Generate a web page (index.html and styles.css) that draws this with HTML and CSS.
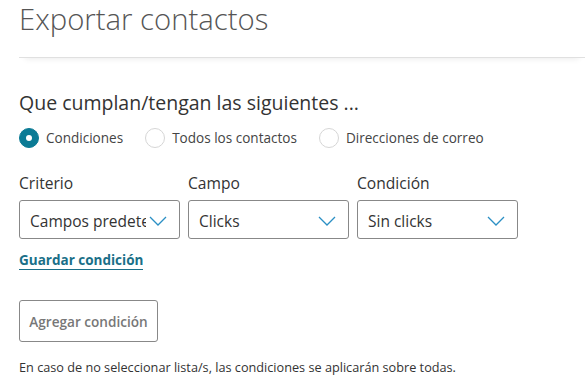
FILE: index.html
```html
<!DOCTYPE html>
<html lang="es">
<head>
<meta charset="utf-8">
<link rel="stylesheet" href="styles.css">
</head>
<body>
<div class="page">
  <header class="header">
    <h1 class="title">Exportar contactos</h1>
  </header>
  <section class="content">
    <h2 class="subtitle">Que cumplan/tengan las siguientes ...</h2>
    <div class="radios">
      <label class="radio"><span class="dot checked"></span>Condiciones</label>
      <label class="radio"><span class="dot"></span>Todos los contactos</label>
      <label class="radio"><span class="dot"></span>Direcciones de correo</label>
    </div>
    <div class="fields">
      <div class="field">
        <div class="label">Criterio</div>
        <div class="select"><span class="val">Campos predeterminados</span><svg class="chev" viewBox="0 0 18 10" width="18" height="10"><path d="M1 1l8 8 8-8" fill="none" stroke="currentColor" stroke-width="1.3"/></svg></div>
      </div>
      <div class="field">
        <div class="label">Campo</div>
        <div class="select"><span class="val">Clicks</span><svg class="chev" viewBox="0 0 18 10" width="18" height="10"><path d="M1 1l8 8 8-8" fill="none" stroke="currentColor" stroke-width="1.3"/></svg></div>
      </div>
      <div class="field">
        <div class="label">Condición</div>
        <div class="select"><span class="val">Sin clicks</span><svg class="chev" viewBox="0 0 18 10" width="18" height="10"><path d="M1 1l8 8 8-8" fill="none" stroke="currentColor" stroke-width="1.3"/></svg></div>
      </div>
    </div>
    <a class="save">Guardar condición</a>
    <div><button class="add">Agregar condición</button></div>
    <p class="note">En caso de no seleccionar lista/s, las condiciones se aplicarán sobre todas.</p>
  </section>
</div>
</body>
</html>
```
FILE: styles.css
```css
* { box-sizing: border-box; }
html, body { margin: 0; padding: 0; background: #fff; }
body { font-family: "Open Sans", "Liberation Sans", sans-serif; color: #333; }
.page { padding-left: 19px; }
.header {
  height: 58px;
  border-bottom: 1px solid #e0e0e0;
  box-shadow: 0 7px 6px -6px rgba(0,0,0,0.08);
}
.title {
  margin: 0;
  font-weight: 300;
  font-size: 29.3px;
  line-height: 38px;
  color: #555;
}
.content { padding-top: 32px; }
.subtitle {
  margin: 0;
  font-weight: 400;
  font-size: 19.5px;
  line-height: 26px;
  color: #333;
}
.radios { display: flex; margin-top: 11px; height: 22px; align-items: center; }
.radio {
  display: flex; align-items: center;
  font-size: 13.55px; color: #444;
  margin-right: 22px;
}
.dot {
  width: 20px; height: 20px; border-radius: 50%;
  border: 1px solid #d6d6d6; margin-right: 7px; background: #fff;
}
.dot.checked { background: #0b7b95; border-color: #0b7b95; position: relative; }
.dot.checked::after {
  content: ""; position: absolute; left: 6px; top: 6px;
  width: 6px; height: 6px; border-radius: 50%; background: #fff;
}
.fields { display: flex; gap: 8px; margin-top: 23px; }
.field { width: 161px; }
.label { font-size: 15.6px; line-height: 22px; color: #333; margin-bottom: 6px; }
.select {
  height: 39px; border: 1px solid #888; border-radius: 3px;
  display: flex; align-items: center; padding: 2px 12px 0 10px;
  font-size: 15.5px; color: #333;
}
.val { flex: 1; white-space: nowrap; overflow: hidden; min-width: 0; }
.chev { color: #2b8fc4; flex: none; margin-left: 3px; }
.save {
  display: inline-block; margin-top: 12px;
  font-size: 13.5px; font-weight: 700; color: #1a6f88;
  border-bottom: 1px solid #1a6f88; line-height: 18px;
}
.add {
  margin-top: 30px;
  width: 139px; height: 42px;
  border: 1px solid #888; border-radius: 3px; background: #fff;
  font-family: inherit; font-size: 13.6px; font-weight: 600; color: #777;
}
.note { margin: 16px 0 0; font-size: 12.7px; color: #333; }
```
